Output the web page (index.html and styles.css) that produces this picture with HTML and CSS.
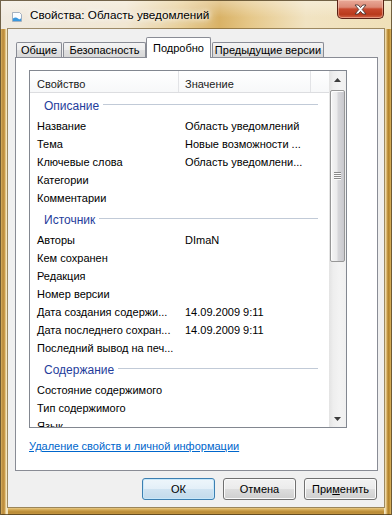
FILE: index.html
```html
<!DOCTYPE html>
<html lang="ru">
<head>
<meta charset="utf-8">
<title>Свойства: Область уведомлений</title>
<link rel="stylesheet" href="styles.css">
</head>
<body>
<div class="window">
  <div class="titlebar">
    <svg class="ticon" width="12" height="12" viewBox="0 0 12 12">
      <path d="M1.5 1.5h7l2 2v7h-9z" fill="#fbfdff" stroke="#8fa0b4" stroke-width="0.8"/>
      <path d="M1.9 7.6 Q4.5 5.4 7 7.4 T10.1 6.8 V10.1 H1.9z" fill="#3a98de"/>
    </svg>
    <span class="title">Свойства: Область уведомлений</span>
    <div class="close">
      <svg width="13" height="11" viewBox="0 0 13 11">
        <path d="M1 1H4.2L6.5 3.6L8.8 1H12L8.2 5.5L12 10H8.8L6.5 7.4L4.2 10H1L4.8 5.5Z" fill="#fff" stroke="#4a3632" stroke-width="0.9" stroke-linejoin="round"/>
      </svg>
    </div>
  </div>
  <div class="client">
    <div class="tabs">
      <div class="tab t1">Общие</div>
      <div class="tab t2">Безопасность</div>
      <div class="tab t3 sel">Подробно</div>
      <div class="tab t4">Предыдущие версии</div>
    </div>
    <div class="panel">
      <div class="list">
        <div class="lmain">
          <div class="lhead">
            <div class="hc hc1">Свойство</div>
            <div class="hc hc2">Значение</div>
            <div class="hc hc3"></div>
          </div>
          <div class="lbody">
            <div class="group"><span>Описание</span><i></i></div>
            <div class="row"><span>Название</span><span>Область уведомлений</span></div>
            <div class="row"><span>Тема</span><span>Новые возможности ...</span></div>
            <div class="row"><span>Ключевые слова</span><span>Область уведомлени...</span></div>
            <div class="row"><span>Категории</span><span></span></div>
            <div class="row"><span>Комментарии</span><span></span></div>
            <div class="group"><span>Источник</span><i></i></div>
            <div class="row"><span>Авторы</span><span>DImaN</span></div>
            <div class="row"><span>Кем сохранен</span><span></span></div>
            <div class="row"><span>Редакция</span><span></span></div>
            <div class="row"><span>Номер версии</span><span></span></div>
            <div class="row"><span>Дата создания содержи...</span><span>14.09.2009 9:11</span></div>
            <div class="row"><span>Дата последнего сохран...</span><span>14.09.2009 9:11</span></div>
            <div class="row"><span>Последний вывод на печ...</span><span></span></div>
            <div class="group"><span>Содержание</span><i></i></div>
            <div class="row"><span>Состояние содержимого</span><span></span></div>
            <div class="row"><span>Тип содержимого</span><span></span></div>
            <div class="row"><span>Язык</span><span></span></div>
          </div>
        </div>
        <div class="vscroll">
          <div class="sbtn">
            <svg width="7" height="4" viewBox="0 0 7 4"><path d="M0 4L3.5 0L7 4Z" fill="#3c3c3c"/></svg>
          </div>
          <div class="track">
            <div class="thumb">
              <svg width="7" height="8" viewBox="0 0 7 8">
                <path d="M0 0.5H7M0 2.5H7M0 4.5H7M0 6.5H7" stroke="#8a8a8a" stroke-width="1"/>
                <path d="M0 1.5H7M0 3.5H7M0 5.5H7M0 7.5H7" stroke="#fafafa" stroke-width="1"/>
              </svg>
            </div>
          </div>
          <div class="sbtn">
            <svg width="7" height="4" viewBox="0 0 7 4"><path d="M0 0L3.5 4L7 0Z" fill="#3c3c3c"/></svg>
          </div>
        </div>
      </div>
      <a class="link" href="#">Удаление свойств и личной информации</a>
    </div>
    <div class="buttons">
      <div class="btn default">ОК</div>
      <div class="btn">Отмена</div>
      <div class="btn">При<u>м</u>енить</div>
    </div>
  </div>
</div>
</body>
</html>
```
FILE: styles.css
```css
* {
  box-sizing: border-box;
}

html,
body {
  margin: 0;
  padding: 0;
}

body {
  width: 392px;
  height: 515px;
  overflow: hidden;
  font-family: "Liberation Sans", Arial, sans-serif;
  font-size: 11px;
  color: #000;
  background: #e6cf98;
}

.window {
  width: 392px;
  height: 515px;
  display: flex;
  flex-direction: column;
  background:
    linear-gradient(to right, #f2e2b6 0, #d8b060 1px, #b8883a 3px, #cfa24e 5px, #f6e8c2 6px, #efdfb6 8px) left 0 top 0 / 8px 100% no-repeat,
    linear-gradient(to left, #efdba6 0, #c89838 2px, #ad7f2c 4px, #d6ad5a 5px, #f4e6c0 7px, #f0e2bc 8px) right 0 top 0 / 8px 100% no-repeat,
    linear-gradient(to bottom, #f4e6c0 0, #dcb462 2px, #b98a34 5px, #c99c4a 8px) 0 100% / 100% 8px no-repeat,
    #e6cf98;
  box-shadow: inset 0 0 0 1px rgba(70, 52, 22, 0.75);
}

.titlebar {
  flex: none;
  height: 29px;
  display: flex;
  align-items: flex-start;
  padding-left: 11px;
  background:
    linear-gradient(to bottom, rgba(255, 255, 255, 0.35), rgba(255, 255, 255, 0) 60%),
    linear-gradient(to right, #f0eae0 0, #f1e7d2 32%, #e8cf98 46%, #d9b266 56%, #e6c88a 64%, #f1e3c2 78%, #f0e0b8 100%);
  box-shadow: inset 1px 1px 0 rgba(70, 52, 22, 0.75), inset -1px 0 0 rgba(70, 52, 22, 0.75);
}

.ticon {
  flex: none;
  margin-top: 11px;
}

.title {
  margin-left: 7px;
  margin-top: 8px;
  line-height: 14px;
  font-size: 11.7px;
  white-space: nowrap;
  color: #000;
  text-shadow: 0 0 5px #fff, 0 0 9px #fff, 0 0 12px rgba(255, 255, 255, 0.8);
}

.close {
  flex: none;
  margin-left: auto;
  margin-right: 8px;
  width: 47px;
  height: 19px;
  display: flex;
  align-items: center;
  justify-content: center;
  border: 1px solid #5a2014;
  border-top: 0;
  border-radius: 0 0 5px 5px;
  background: linear-gradient(to bottom, #e9a998 0, #dc8a76 40%, #c8492e 50%, #b93a1c 80%, #d2664a 100%);
  box-shadow: inset 0 0 0 1px rgba(255, 220, 200, 0.45);
}

.client {
  flex: none;
  margin: 0 8px;
  width: 376px;
  height: 478px;
  padding-top: 8px;
  background: #f0f0f0;
  display: flex;
  flex-direction: column;
  box-shadow: 0 0 0 1px rgba(110, 88, 46, 0.65);
}

.tabs {
  display: flex;
  align-items: flex-end;
  height: 21px;
  margin-left: 8px;
  margin-bottom: -1px;
  position: relative;
  z-index: 1;
}

.tab {
  height: 15px;
  margin-bottom: 1px;
  border: 1px solid #898c95;
  border-bottom: 0;
  border-radius: 2px 2px 0 0;
  background: linear-gradient(to bottom, #f4f4f4 0, #ececec 50%, #e0e0e0 51%, #d8d8d8 100%);
  display: flex;
  align-items: center;
  justify-content: center;
  white-space: nowrap;
  line-height: 13px;
}

.t1 {
  width: 46px;
}

.t2 {
  width: 83px;
  margin-left: 1px;
}

.t3 {
  width: 65px;
}

.t4 {
  width: 112px;
  margin-left: 1px;
}

.tab.sel {
  height: 21px;
  margin-bottom: 0;
  background: #fff;
}

.panel {
  margin-left: 7px;
  width: 363px;
  height: 414px;
  border: 1px solid #898c95;
  background: #fff;
  padding: 12px 0 0 13px;
}

.list {
  width: 318px;
  height: 358px;
  border: 1px solid #828790;
  display: flex;
  background: #fff;
}

.lmain {
  flex: 1;
  min-width: 0;
  overflow: hidden;
}

.lhead {
  display: flex;
  height: 22px;
  border-bottom: 1px solid #dcdde0;
  background: linear-gradient(to bottom, #ffffff 0, #f7f8f9 100%);
}

.hc {
  padding-top: 5px;
  line-height: 16px;
  padding-left: 7px;
  border-right: 1px solid #e2e3e6;
  color: #1a1a1a;
  white-space: nowrap;
}

.hc1 {
  width: 149px;
}

.hc2 {
  width: 132px;
  padding-left: 6px;
}

.hc3 {
  flex: 1;
  border-right: 0;
}

.group {
  display: flex;
  align-items: center;
  height: 24px;
  padding-top: 2px;
  padding-left: 14px;
  padding-right: 11px;
  color: #1f3d9c;
  font-size: 12px;
  white-space: nowrap;
}

.group i {
  flex: 1;
  height: 1px;
  margin-left: 4px;
  margin-bottom: 3px;
  background: #c1cad7;
}

.row {
  display: grid;
  grid-template-columns: 148px 1fr;
  height: 18px;
  line-height: 18px;
}

.row span {
  padding-left: 7px;
  white-space: nowrap;
  overflow: hidden;
}

.vscroll {
  flex: none;
  width: 17px;
  display: flex;
  flex-direction: column;
  background: linear-gradient(to right, #e3e3e3 0, #eeeeee 25%, #f3f3f3 60%, #f0f0f0 100%);
}

.sbtn {
  flex: none;
  height: 17px;
  display: flex;
  align-items: center;
  justify-content: center;
}

.track {
  flex: 1;
}

.thumb {
  margin: 2px 1px 0 1px;
  height: 172px;
  border: 1px solid #979797;
  border-radius: 2px;
  background: linear-gradient(to right, #f5f5f5 0, #ebebec 45%, #d7d7da 55%, #c9c9ce 100%);
  box-shadow: inset 1px 1px 0 #fdfdfd;
  display: flex;
  align-items: center;
  justify-content: center;
}

.link {
  display: inline-block;
  margin-top: 11px;
  line-height: 14px;
  color: #0066cc;
  text-decoration: underline;
  white-space: nowrap;
}

.buttons {
  display: flex;
  justify-content: flex-end;
  gap: 8px;
  margin-top: 7px;
  padding-right: 7px;
}

.btn {
  width: 73px;
  height: 22px;
  border: 1px solid #707070;
  border-radius: 3px;
  background: linear-gradient(to bottom, #f2f2f2 0, #ebebeb 50%, #dddddd 51%, #cfcfcf 100%);
  box-shadow: inset 0 0 0 1px #fbfbfb;
  display: flex;
  align-items: center;
  justify-content: center;
  white-space: nowrap;
}

.btn u {
  text-decoration: underline;
}

.btn.default {
  border-color: #3c7fb1;
  background: linear-gradient(to bottom, #eef6fb 0, #e3eff8 50%, #d0e3f1 51%, #c3daeb 100%);
  box-shadow: inset 0 0 0 1px #c8e8fa;
}
```
